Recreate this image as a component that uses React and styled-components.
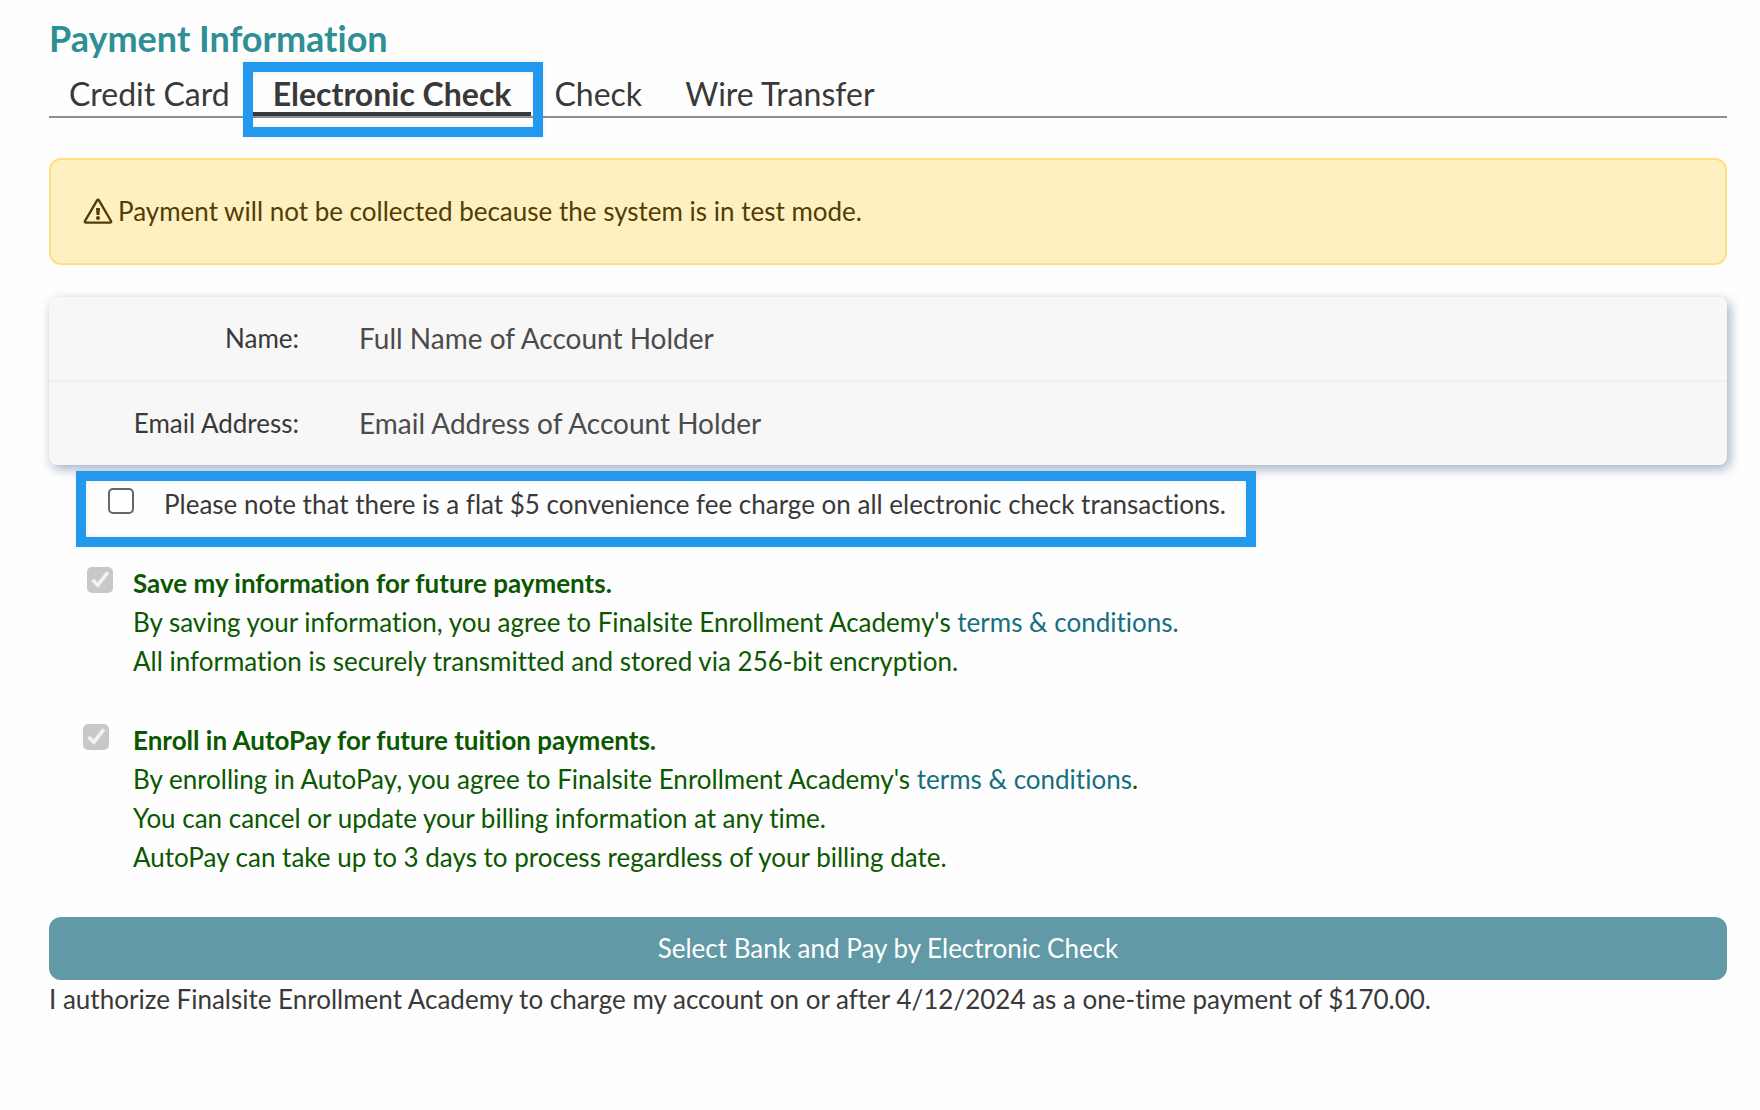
import React, { useState } from "react";
import styled, { createGlobalStyle, css } from "styled-components";

const methods = ["Credit Card", "Electronic Check", "Check", "Wire Transfer"];

const WarningIcon = () => (
    <svg width="30" height="28" viewBox="0 0 30 28" fill="none" aria-hidden="true">
        <path d="M14.2 2.2Q15 1 15.8 2.2L28 23Q28.6 24.6 27 24.6H3Q1.4 24.6 2 23Z" stroke="currentColor" strokeWidth="2.4" strokeLinejoin="round" />
        <path d="M13 10h4l-.5 7h-3Z" fill="currentColor" />
        <circle cx="15" cy="20" r="2" fill="currentColor" />
    </svg>
);

const App = () => {
    const [method, setMethod] = useState("Electronic Check");
    const [feeAccepted, setFeeAccepted] = useState(false);

    return (
        <>
            <GlobalStyle />
            <Page onSubmit={(e) => e.preventDefault()}>
                <Title>Payment Information</Title>
                <Tabs role="tablist">
                    {methods.map((name) => (
                        <Tab
                            key={name}
                            type="button"
                            role="tab"
                            aria-selected={name === method}
                            $active={name === method}
                            onClick={() => setMethod(name)}
                        >
                            {name}
                        </Tab>
                    ))}
                </Tabs>

                <Notice role="alert">
                    <WarningIcon />
                    <span>Payment will not be collected because the system is in test mode.</span>
                </Notice>

                <Card>
                    <Field>
                        <label htmlFor="name">Name:</label>
                        <input id="name" type="text" placeholder="Full Name of Account Holder" />
                    </Field>
                    <Field>
                        <label htmlFor="email">Email Address:</label>
                        <input id="email" type="email" placeholder="Email Address of Account Holder" />
                    </Field>
                </Card>

                <Fee>
                    <Checkbox
                        id="fee"
                        checked={feeAccepted}
                        onChange={(e) => setFeeAccepted(e.target.checked)}
                    />
                    <label htmlFor="fee">
                        Please note that there is a flat $5 convenience fee charge on all electronic check transactions.
                    </label>
                </Fee>

                <Option $indent={38} $gap={20}>
                    <Checkbox id="save" defaultChecked disabled />
                    <div>
                        <OptionTitle htmlFor="save">Save my information for future payments.</OptionTitle>
                        <p>
                            By saving your information, you agree to Finalsite Enrollment Academy's{" "}
                            <Link href="#terms">terms &amp; conditions.</Link>
                        </p>
                        <p>All information is securely transmitted and stored via 256-bit encryption.</p>
                    </div>
                </Option>

                <Option $indent={34} $gap={24}>
                    <Checkbox id="autopay" defaultChecked disabled />
                    <div>
                        <OptionTitle htmlFor="autopay">Enroll in AutoPay for future tuition payments.</OptionTitle>
                        <p>
                            By enrolling in AutoPay, you agree to Finalsite Enrollment Academy's{" "}
                            <Link href="#terms">terms &amp; conditions</Link>.
                        </p>
                        <p>You can cancel or update your billing information at any time.</p>
                        <p>AutoPay can take up to 3 days to process regardless of your billing date.</p>
                    </div>
                </Option>

                <PayButton type="submit">Select Bank and Pay by Electronic Check</PayButton>
                <p>
                    I authorize Finalsite Enrollment Academy to charge my account on or after 4/12/2024 as a one-time
                    payment of $170.00.
                </p>
            </Page>
        </>
    );
};

const GlobalStyle = createGlobalStyle`
    * {
        box-sizing: border-box;
        margin: 0;
        padding: 0;
    }
    body {
        background: #fefefe;
        color: #393939;
        font-family: Lato, "Liberation Sans", sans-serif;
        font-size: 26px;
        line-height: 39px;
        font-variant-ligatures: none;
    }
    button, input {
        font-family: inherit;
        font-variant-ligatures: none;
        color: inherit;
    }
`;

// Blue frame drawn over the parts that need attention
const highlight = css`
    content: "";
    position: absolute;
    border: 10px solid #2299ec;
    box-shadow: 0 0 4px rgba(0, 0, 0, 0.1), inset 0 0 4px rgba(0, 0, 0, 0.1);
    pointer-events: none;
    z-index: 1;
`;

const Page = styled.form`
    padding: 16px 33px 40px 49px;
`;

const Title = styled.h1`
    color: #2f8f95;
    font-size: 36px;
    line-height: 44px;
    font-weight: 700;
`;

const Tabs = styled.div`
    display: flex;
    gap: 3px;
    margin-top: 16px;
    border-bottom: 2px solid #909090;
`;

const Tab = styled.button`
    position: relative;
    padding: 1px 20px;
    border: 0;
    border-bottom: 4px solid ${({ $active }) => ($active ? "#393939" : "transparent")};
    background: none;
    font-size: 32px;
    line-height: 34px;
    font-weight: ${({ $active }) => ($active ? 700 : 400)};
    cursor: pointer;
    &::after {
        ${({ $active }) => $active && highlight}
        inset: -14px -12px -25px -10px;
    }
`;

const Notice = styled.div`
    display: flex;
    align-items: center;
    gap: 5px;
    margin-top: 40px;
    padding: 32px;
    border: 2px solid #ffe083;
    border-radius: 12px;
    background: #fff0c2;
    color: #523e02;
`;

const Card = styled.div`
    margin-top: 32px;
    border-radius: 8px;
    background: #f7f7f7;
    box-shadow: 3px 4px 12px #9fb0c6;
`;

const Field = styled.div`
    display: grid;
    grid-template-columns: 250px 1fr;
    column-gap: 60px;
    align-items: center;
    & + & {
        border-top: 2px solid #edf1f6;
    }
    label {
        text-align: right;
    }
    input {
        height: 83px;
        padding-bottom: 2px;
        border: 0;
        background: none;
        font-size: 28px;
        outline: none;
    }
    input::placeholder {
        color: #4b4b4b;
        opacity: 1;
    }
`;

const Fee = styled.div`
    position: relative;
    display: flex;
    gap: 30px;
    width: fit-content;
    margin: 20px 0 0 59px;
    &::after {
        ${highlight}
        inset: -14px -30px -23px -32px;
    }
`;

const Checkbox = styled.input.attrs({ type: "checkbox" })`
    appearance: none;
    flex: none;
    display: grid;
    width: 26px;
    height: 26px;
    margin-top: 3px;
    border: 2px solid #666;
    border-radius: 5px;
    background: #fff;
    &:checked {
        border-color: #2299ec;
        background: #2299ec;
    }
    &:checked:disabled {
        border-color: #c8c8c8;
        background: #c8c8c8;
    }
    &:checked::before {
        content: "";
        background: #f2f2f2;
        clip-path: polygon(10% 55%, 23% 44%, 39% 61%, 79% 10%, 92% 20%, 41% 86%);
    }
`;

const Option = styled.div`
    display: flex;
    gap: ${({ $gap }) => $gap}px;
    margin: 40px 0 0 ${({ $indent }) => $indent}px;
    color: #0b5800;
`;

const OptionTitle = styled.label`
    display: block;
    font-weight: 700;
`;

const Link = styled.a`
    color: #156f80;
    text-decoration: none;
`;

const PayButton = styled.button`
    display: block;
    width: 100%;
    margin-top: 40px;
    padding: 12px;
    border: 0;
    border-radius: 12px;
    background: #619aa6;
    color: #fff;
    font-size: 26px;
    line-height: 39px;
    cursor: pointer;
`;

export default App;
